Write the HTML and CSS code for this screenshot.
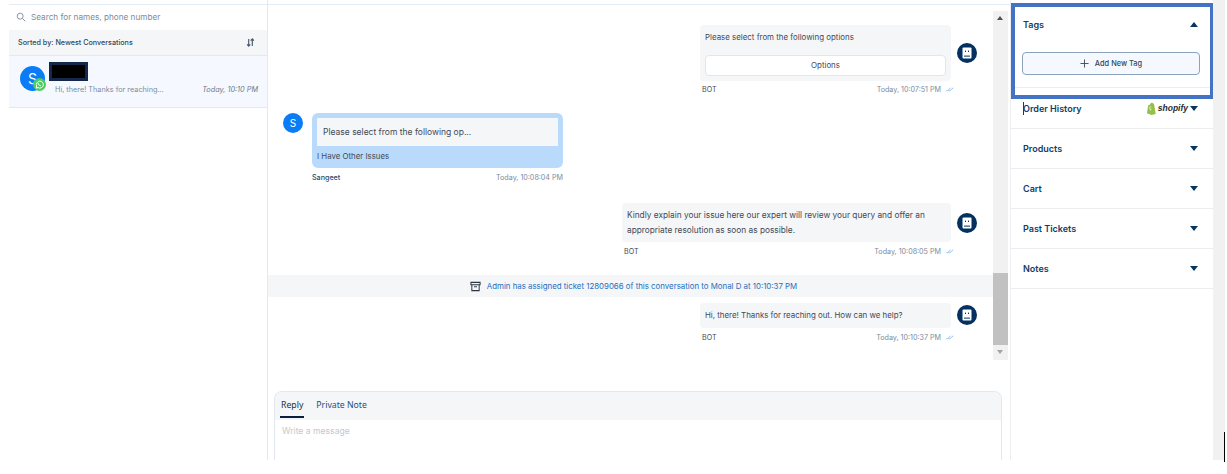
FILE: index.html
```html
<!DOCTYPE html>
<html lang="en">
<head>
<meta charset="utf-8">
<title>Conversations</title>
<link rel="stylesheet" href="styles.css">
</head>
<body>
<div class="app">
  <aside class="left">
    <div class="search">
      <svg class="search-icon" viewBox="0 0 12 12" width="10" height="10"><circle cx="5" cy="5" r="3.6" fill="none" stroke="#7d8b9c" stroke-width="1.1"/><path d="M7.7 7.7 11 11" stroke="#7d8b9c" stroke-width="1.1" fill="none"/></svg>
      <span>Search for names, phone number</span>
    </div>
    <div class="sort">
      <span>Sorted by: Newest Conversations</span>
      <svg viewBox="0 0 10 10" width="9" height="9"><path d="M3 1v8M1.2 7 3 9l1.8-2M7 9V1M5.2 3 7 1l1.8 2" fill="none" stroke="#4a5a6c" stroke-width="1.3"/></svg>
    </div>
    <div class="conv">
      <div class="conv-avatar">S
        <span class="wa"><svg viewBox="0 0 12 12" width="13" height="13"><circle cx="6" cy="6" r="6" fill="#4ccb5f"/><path d="M2.800 9.400 3.400 7.400A3.200 3.200 0 1 1 4.600 8.800z" fill="none" stroke="#fff" stroke-width=".9"/><path d="M4.800 4.600c0 1.500 1.100 2.600 2.600 2.600" fill="none" stroke="#fff" stroke-width=".9"/></svg></span>
      </div>
      <div class="conv-body">
        <div class="redact"></div>
        <div class="conv-line"><span>Hi, there! Thanks for reaching...</span><em>Today, 10:10 PM</em></div>
      </div>
    </div>
  </aside>

  <main class="center">
    <div class="thread-wrap">
      <div class="thread">
        <div class="msg out m1">
          <div class="msg-col w251">
            <div class="bubble">
              <div class="opt-text">Please select from the following options</div>
              <div class="opt-btn">Options</div>
            </div>
            <div class="meta first"><span class="who">BOT</span><span class="when">Today, 10:07:51 PM <svg class="ticks" viewBox="0 0 10 6" width="8" height="5"><path d="M.5 3.500 2 5 5.500.8M3.500 4 4.500 5 9 .8" fill="none" stroke="#6aa9e4" stroke-width=".9"/></svg></span></div>
          </div>
          <div class="bot bot-m1"><svg viewBox="0 0 20 20" width="20" height="20"><circle cx="10" cy="10" r="10" fill="#04315f"/><rect x="5.500" y="4.500" width="9" height="11" rx="1" fill="#fff"/><rect x="7" y="12.600" width="6" height="1" fill="#04315f"/><rect x="8" y="7.600" width="1" height="1.400" fill="#04315f"/><rect x="11" y="7.600" width="1" height="1.400" fill="#04315f"/></svg></div>
        </div>

        <div class="msg in m2">
          <div class="user">S</div>
          <div class="msg-col w251">
            <div class="bubble-blue">
              <div class="quote">Please select from the following op...</div>
              <div class="reply-text">I Have Other Issues</div>
            </div>
            <div class="meta"><span class="who strong">Sangeet</span><span class="when">Today, 10:08:04 PM</span></div>
          </div>
        </div>

        <div class="msg out m3">
          <div class="msg-col w329">
            <div class="bubble tall">Kindly explain your issue here our expert will review your query and offer an appropriate resolution as soon as possible.</div>
            <div class="meta"><span class="who">BOT</span><span class="when">Today, 10:08:05 PM <svg class="ticks" viewBox="0 0 10 6" width="8" height="5"><path d="M.5 3.500 2 5 5.500.8M3.500 4 4.500 5 9 .8" fill="none" stroke="#6aa9e4" stroke-width=".9"/></svg></span></div>
          </div>
          <div class="bot bot-m3"><svg viewBox="0 0 20 20" width="20" height="20"><circle cx="10" cy="10" r="10" fill="#04315f"/><rect x="5.500" y="4.500" width="9" height="11" rx="1" fill="#fff"/><rect x="7" y="12.600" width="6" height="1" fill="#04315f"/><rect x="8" y="7.600" width="1" height="1.400" fill="#04315f"/><rect x="11" y="7.600" width="1" height="1.400" fill="#04315f"/></svg></div>
        </div>

        <div class="notice">
          <svg viewBox="0 0 12 12" width="11" height="11"><path d="M1 1.500h10v2.600H1zM2 4.100V10.500h8V4.100M4.400 6.200h3.200" fill="none" stroke="#2c3440" stroke-width="1.100"/></svg>
          <span>Admin has assigned ticket 12809066 of this conversation to Monal D at 10:10:37 PM</span>
        </div>

        <div class="msg out m4">
          <div class="msg-col w251">
            <div class="bubble short">Hi, there! Thanks for reaching out. How can we help?</div>
            <div class="meta"><span class="who">BOT</span><span class="when">Today, 10:10:37 PM <svg class="ticks" viewBox="0 0 10 6" width="8" height="5"><path d="M.5 3.500 2 5 5.500.8M3.500 4 4.500 5 9 .8" fill="none" stroke="#6aa9e4" stroke-width=".9"/></svg></span></div>
          </div>
          <div class="bot bot-m4"><svg viewBox="0 0 20 20" width="20" height="20"><circle cx="10" cy="10" r="10" fill="#04315f"/><rect x="5.500" y="4.500" width="9" height="11" rx="1" fill="#fff"/><rect x="7" y="12.600" width="6" height="1" fill="#04315f"/><rect x="8" y="7.600" width="1" height="1.400" fill="#04315f"/><rect x="11" y="7.600" width="1" height="1.400" fill="#04315f"/></svg></div>
        </div>
      </div>
      <div class="scrollbar">
        <div class="arrow up"></div>
        <div class="track"></div>
        <div class="thumb"></div>
        <div class="arrow down"></div>
      </div>
    </div>

    <div class="compose">
      <div class="tabs">
        <span class="tab active">Reply</span>
        <span class="tab">Private Note</span>
      </div>
      <div class="input">Write a message</div>
    </div>
  </main>

  <aside class="right">
    <section class="acc tags">
      <div class="acc-head"><span>Tags</span><i class="caret caret-up"></i></div>
      <button class="add-tag"><svg viewBox="0 0 10 10" width="9" height="9"><path d="M5 .5v9M.5 5h9" stroke="#33475b" stroke-width="1" fill="none"/></svg><span>Add New Tag</span></button>
    </section>
    <section class="acc order"><div class="acc-head"><span class="cursor-label">Order History</span>
      <span class="shop">
        <svg viewBox="0 0 12 14" width="11" height="13"><path d="M1 12.200 2.400 3.600C3.200 3.300 4 3 4.300 2.700 4.800 1.200 5.700.6 6.500.6c.6 0 1 .4 1.200 1l1 .1 1.900 11.400-4.600.9z" fill="#95bf47"/><path d="M5.800 5.400c-.7-.3-1.900-.2-1.900.9 0 1.100 1.600 1.200 1.600 2 0 .6-.9.6-1.600.1" fill="none" stroke="#fff" stroke-width=".8"/></svg>
        <b>shopify</b>
      </span><i class="caret"></i></div></section>
    <section class="acc"><div class="acc-head"><span>Products</span><i class="caret"></i></div></section>
    <section class="acc"><div class="acc-head"><span>Cart</span><i class="caret"></i></div></section>
    <section class="acc"><div class="acc-head"><span>Past Tickets</span><i class="caret"></i></div></section>
    <section class="acc"><div class="acc-head"><span>Notes</span><i class="caret"></i></div></section>
    <div class="highlight"></div>
  </aside>

  <div class="gutter"><div class="edge"></div></div>
</div>
</body>
</html>
```
FILE: styles.css
```css
* { box-sizing: border-box; }
html, body { margin: 0; height: 474px; background: #fff; overflow: hidden; }
body { font-family: Inter, "Liberation Sans", sans-serif; color: #33475b; }

.app { display: flex; height: 460px; padding-left: 9px; }

.left { width: 259px; flex: none; border-right: 1px solid #e3e9f0; padding-top: 4px; display: flex; flex-direction: column; }
.search { height: 26px; border-top: 1px solid #e3edf6; display: flex; align-items: center; padding: 0 0 2px 7px; gap: 5px; font-size: 8.2px; color: #7d8b9c; }
.sort { height: 26px; background: #f5f6f8; border-bottom: 1px solid #dfeaf5; display: flex; align-items: center; justify-content: space-between; padding: 0 12px 0 9px; font-size: 7.2px; font-weight: 500; color: #33475b; }
.conv { height: 52px; background: #f5f9ff; border-bottom: 1px solid #dfeaf5; display: flex; padding: 6px 9px 0 11px; }
.conv-avatar { position: relative; width: 25px; height: 25px; margin-top: 4px; border-radius: 50%; background: #0a7cf5; color: #fff; font-size: 14px; line-height: 25px; text-align: center; flex: none; }
.wa { position: absolute; right: -1px; bottom: 0; display: flex; }
.conv-body { flex: 1; margin-left: 4px; }
.redact { width: 39px; height: 19px; background: #000; border: 3px solid #14284b; }
.conv-line { display: flex; justify-content: space-between; margin: 4px 0 0 6px; font-size: 7.3px; color: #7d8b9c; }
.conv-line em { font-size: 7.3px; color: #6b7888; }

.center { width: 742px; flex: none; display: flex; flex-direction: column; }
.thread-wrap { height: 387px; margin-top: 4px; display: flex; flex: none; border-top: 1px solid #e3edf6; }
.thread { width: 725px; flex: none; }
.msg { display: flex; }
.msg.out { justify-content: flex-end; padding-right: 16px; gap: 6px; }
.msg.in { padding-left: 15px; gap: 9px; }
.m1 { margin-top: 20px; }
.m2 { margin-top: 19px; }
.m3 { margin-top: 21px; }
.m4 { margin-top: 6px; }
.w251 { width: 251px; }
.w329 { width: 329px; }
.bubble { background: #f5f6f8; border-radius: 4px; font-size: 7.9px; line-height: 14px; color: #3f4a57; padding: 5px; }
.bubble.tall { height: 39px; font-size: 8.3px; line-height: 14.5px; }
.bubble.short { height: 25px; line-height: 15px; }
.opt-text { margin-bottom: 11px; }
.opt-btn { height: 21px; background: #fff; border: 1px solid #e3e6ea; border-radius: 4px; text-align: center; line-height: 19px; }
.meta { display: flex; justify-content: space-between; margin-top: 5px; font-size: 7.15px; line-height: 9px; color: #3f4a57; }
.meta.first { margin-top: 4px; }
.out .meta { padding-left: 2px; margin-right: -3px; }
.meta .when { color: #7d8b9c; }
.who.strong { font-weight: 500; color: #33475b; }
.ticks { margin-left: 3px; }
.bot { width: 20px; height: 20px; flex: none; }
.bot-m1 { margin-top: 18px; }
.bot-m3 { margin-top: 10px; }
.bot-m4 { margin-top: 2px; }
.user { width: 20px; height: 20px; border-radius: 50%; background: #0a7cf5; color: #fff; font-size: 10px; line-height: 20px; text-align: center; flex: none; }
.bubble-blue { background: #b9dafb; border-radius: 6px; padding: 5px; height: 55px; }
.quote { background: #f5f6f8; height: 28px; font-size: 8.5px; line-height: 28px; padding-left: 6px; color: #3f4a57; }
.reply-text { font-size: 7.85px; line-height: 10px; margin-top: 5px; color: #3f4a57; }
.notice { margin-top: 19px; height: 22px; background: #f5f6f8; display: flex; align-items: center; justify-content: center; gap: 6px; font-size: 7.87px; color: #1f6fbf; padding-left: 6px; }

.scrollbar { width: 15px; margin-top: 6px; height: 349px; background: #f1f1f1; display: flex; flex-direction: column; align-items: center; }
.track { flex: 1; }
.thumb { width: 15px; height: 72px; background: #c1c1c1; }
.arrow { height: 15px; width: 15px; position: relative; flex: none; }
.arrow::after { content: ""; position: absolute; left: 4px; border-left: 3.5px solid transparent; border-right: 3.5px solid transparent; }
.arrow.up::after { top: 5px; border-bottom: 4px solid #505050; }
.arrow.down::after { top: 5px; border-top: 4px solid #a3a3a3; }

.compose { margin: 0 8px 0 6px; flex: 1; border: 1px solid #e3e8ee; border-bottom: 0; border-radius: 8px 8px 0 0; overflow: hidden; }
.tabs { height: 28px; background: #f5f6f8; display: flex; gap: 11px; padding-left: 5px; font-family: "Noto Sans", sans-serif; font-size: 8.7px; }
.tab { height: 26px; line-height: 27px; color: #1d4f7c; padding: 0 1px; }
.tab.active { color: #1b2f45; border-bottom: 2px solid #0a1f3a; }
.input { padding: 5px 7px; font-size: 8.6px; line-height: 12px; color: #c4c8cd; }

.right { width: 203px; flex: none; position: relative; border-left: 1px solid #eceef1; padding-top: 5px; }
.acc { height: 40px; border-bottom: 1px solid #ebedf0; padding: 0 15px 0 12px; }
.acc.tags { height: 83px; }
.acc.order { height: 41px; }
.acc-head { height: 39px; display: flex; align-items: center; justify-content: space-between; font-size: 9px; font-weight: 600; color: #0f3e68; }
.tags .acc-head { height: 38px; }
.order .acc-head { height: 40px; }
.cursor-label { position: relative; }
.cursor-label::before { content: ""; position: absolute; left: 0; top: -1px; bottom: -1px; width: 1px; background: #0f3e68; }
.caret { width: 0; height: 0; border-left: 4.5px solid transparent; border-right: 4.5px solid transparent; border-top: 5px solid #0a3560; }
.caret-up { border-top: 0; border-bottom: 5px solid #0a3560; }
.shop { margin-left: auto; margin-right: 2px; display: flex; align-items: center; gap: 1px; }
.shop b { font: italic 700 8.5px "Liberation Sans", sans-serif; color: #1f2a30; }
.add-tag { width: 178px; height: 23px; margin: 9px 0 0 -1px; background: #f5f9ff; border: 1px solid #8ba3bd; border-radius: 4px; display: flex; align-items: center; justify-content: center; gap: 6px; font: 500 7.4px Inter, sans-serif; color: #33475b; padding: 0; }
.highlight { position: absolute; left: 0; top: 3px; width: 203px; height: 96px; border: 4px solid #4472c4; pointer-events: none; }

.gutter { width: 12px; flex: none; background: #f1f1f1; position: relative; }
.edge { position: absolute; right: 0; top: 432px; width: 1px; height: 30px; background: #000; }
```
